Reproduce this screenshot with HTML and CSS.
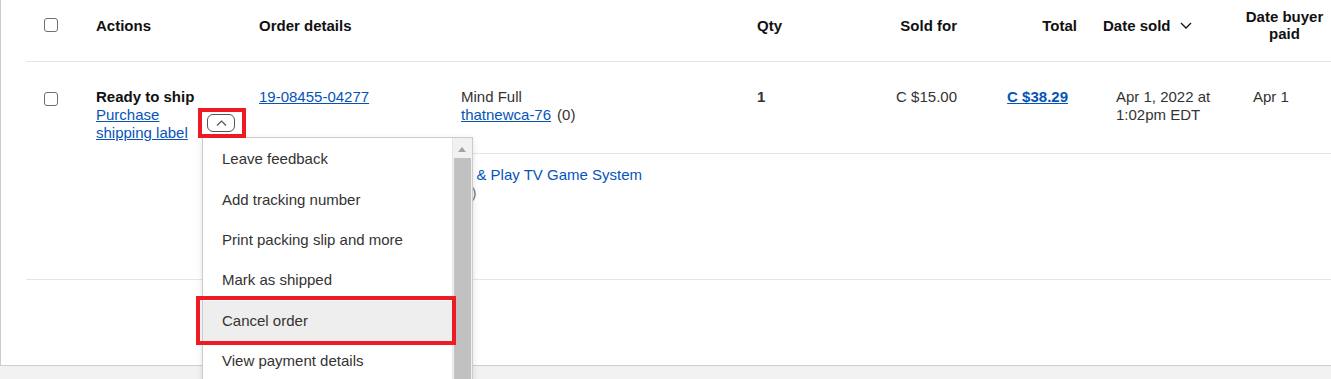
FILE: index.html
```html
<!DOCTYPE html>
<html lang="en">
<head>
  <meta charset="UTF-8">
  <meta name="viewport" content="width=device-width, initial-scale=1.0">
  <title>Orders</title>
  <link rel="stylesheet" href="styles.css">
</head>
<body>
  <div class="panel">
    <div class="orders">
      <div class="grid head">
        <div class="cell check"><input type="checkbox" aria-label="Select all"></div>
        <div class="cell">Actions</div>
        <div class="cell">Order details</div>
        <div class="cell"></div>
        <div class="cell">Qty</div>
        <div class="cell num">Sold for</div>
        <div class="cell num total-head">Total</div>
        <div class="cell sort">Date sold
          <svg width="12" height="7" viewBox="0 0 12 7"><path d="M1 1l5 5 5-5" fill="none" stroke="#111" stroke-width="1.3"/></svg>
        </div>
        <div class="cell paid-head">Date buyer<br>paid</div>
      </div>

      <div class="grid order">
        <div class="cell check row-top"><input type="checkbox" aria-label="Select order"></div>
        <div class="cell actions row-top">
          <strong>Ready to ship</strong>
          <div class="action-line">
            <a href="#" class="label-link">Purchase shipping label</a>
            <button type="button" class="toggle" aria-label="More actions">
              <svg width="11" height="6" viewBox="0 0 11 6"><path d="M1 5.5l4.5-4.5 4.5 4.5" fill="none" stroke="#555" stroke-width="1.2"/></svg>
            </button>
          </div>
        </div>
        <div class="cell row-top"><a href="#">19-08455-04277</a></div>
        <div class="cell row-top buyer">Mind Full<br><a href="#">thatnewca-76</a><span class="score">(0)</span></div>
        <div class="cell row-top qty">1</div>
        <div class="cell row-top num">C $15.00</div>
        <div class="cell row-top num total"><a href="#">C $38.29</a></div>
        <div class="cell row-top date">Apr 1, 2022 at<br>1:02pm EDT</div>
        <div class="cell row-top paid">Apr 1</div>

        <div class="item">
          <div class="thumb"></div>
          <div class="item-text">
            <a href="#">Retro Handheld Plug &amp; Play TV Game System</a>
            <div class="item-id">Item (134069458573)</div>
          </div>
        </div>
      </div>
    </div>

    <ul class="menu">
      <li>Leave feedback</li>
      <li>Add tracking number</li>
      <li>Print packing slip and more</li>
      <li>Mark as shipped</li>
      <li class="active">Cancel order</li>
      <li>View payment details</li>
    </ul>
    <div class="menu-scroll">
      <div class="scroll-up"></div>
      <div class="scroll-thumb"></div>
    </div>

    <div class="callout callout-toggle"></div>
    <div class="callout callout-cancel"></div>
  </div>
</body>
</html>
```

FILE: styles.css
```css
html, body {
    height: 379px;
    overflow: hidden;
}

body {
    margin: 0;
    font-family: "Liberation Sans", Arial, sans-serif;
    font-size: 15px;
    line-height: 18px;
    color: #333333;
    background-color: #f2f2f2;
}

a {
    color: #0654ba;
    text-decoration: underline;
}

.panel {
    position: relative;
    height: 365px;
    background-color: #ffffff;
    border-left: 1px solid #cccccc;
    border-bottom: 1px solid #cccccc;
}

.orders {
    margin-left: 25px;
}

.grid {
    display: grid;
    grid-template-columns: 70px 163px 202px 296px 60px 140px 120px 166px 83px 1fr;
}

.head {
    height: 50px;
    padding-bottom: 11px;
    border-bottom: 1px solid #e5e5e5;
    align-items: center;
    font-weight: bold;
    line-height: 17px;
    color: #111111;
}

.check {
    padding-left: 18px;
}

input[type="checkbox"] {
    appearance: none;
    display: block;
    width: 14px;
    height: 14px;
    margin: 0;
    border: 1px solid #707070;
    border-radius: 3px;
    background-color: #ffffff;
}

.num {
    text-align: right;
}

.sort {
    padding-left: 26px;
    display: flex;
    align-items: center;
}

.sort svg {
    margin-left: 9px;
}

.paid-head {
    text-align: center;
}

.order {
    grid-template-rows: 91px 126px;
    border-bottom: 1px solid #e5e5e5;
}

.row-top {
    grid-row: 1;
    padding-top: 26px;
}

.check.row-top {
    padding-top: 30px;
}

.actions {
    grid-row: 1 / 3;
}

.actions strong {
    display: block;
    color: #111111;
}

.action-line {
    display: flex;
    align-items: flex-start;
}

.label-link {
    width: 100px;
}

.toggle {
    width: 28px;
    height: 18px;
    margin: 8px 0 0 11px;
    padding: 0;
    display: flex;
    align-items: center;
    justify-content: center;
    border: 1px solid #555555;
    border-radius: 6px;
    background-color: #ffffff;
}

.score {
    margin-left: 6px;
}

.qty {
    font-weight: bold;
}

.total {
    padding-right: 9px;
    font-weight: bold;
}

.date {
    padding-left: 39px;
}

.paid {
    padding-left: 10px;
}

.item {
    grid-row: 2;
    grid-column: 3 / -1;
    border-top: 1px solid #e5e5e5;
    padding-top: 12px;
    display: flex;
    gap: 18px;
}

.thumb {
    width: 56px;
    height: 56px;
    background-color: #eeeeee;
}

.item-text a {
    text-decoration: none;
}

.item-id {
    color: #767676;
}

/* action dropdown */
.menu {
    position: absolute;
    left: 201px;
    top: 137px;
    width: 249px;
    height: 260px;
    margin: 0;
    padding: 1px 20px 0 0;
    list-style: none;
    background-color: #ffffff;
    border: 1px solid #cccccc;
    box-shadow: 0 2px 6px rgba(0, 0, 0, 0.12);
    overflow: hidden;
}

.menu li {
    height: 40.4px;
    display: flex;
    align-items: center;
    padding-left: 19px;
    color: #333333;
}

.menu li.active {
    background-color: #eeeeee;
}

.menu-scroll {
    position: absolute;
    left: 451px;
    top: 138px;
    width: 19px;
    height: 260px;
    background-color: #f1f1f1;
    border-left: 1px solid #e6e6e6;
}

.scroll-up {
    height: 20px;
    position: relative;
}

.scroll-up::after {
    content: "";
    position: absolute;
    left: 5px;
    top: 9px;
    border-left: 4px solid transparent;
    border-right: 4px solid transparent;
    border-bottom: 5px solid #a3a3a3;
}

.scroll-thumb {
    margin: 0 1px 0 1px;
    height: 240px;
    background-color: #c1c1c1;
}

/* red annotation boxes */
.callout {
    position: absolute;
    box-sizing: border-box;
    border: 4px solid #ed1c24;
}

.callout-toggle {
    left: 197px;
    top: 108px;
    width: 48px;
    height: 30px;
}

.callout-cancel {
    left: 195px;
    top: 296px;
    width: 260px;
    height: 49px;
}
```
